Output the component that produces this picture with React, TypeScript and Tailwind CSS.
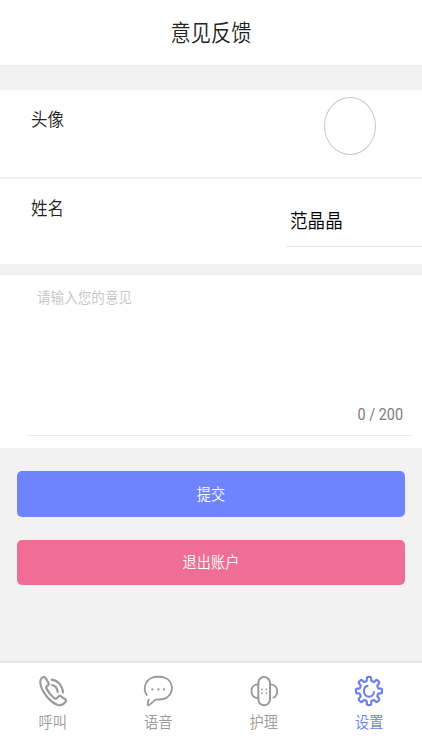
import type { ReactNode } from "react";
import clsx from "clsx";

// eight soft teeth around a slightly tall ring
const gearPath =
  Array.from({ length: 240 }, (_, i) => {
    const t = (i / 240) * Math.PI * 2;
    const r = 33.8 + 5.4 * Math.tanh(3 * Math.cos(8 * t));
    return `${i ? "L" : "M"}${(48 + r * Math.cos(t)).toFixed(2)} ${(48 + r * 1.08 * Math.sin(t)).toFixed(2)}`;
  }).join("") + "Z";

function TabIcon({ children, viewBox = "0 0 90 96" }: { children: ReactNode; viewBox?: string }) {
  return (
    <svg
      viewBox={viewBox}
      className="h-8 w-[30px]"
      fill="none"
      stroke="currentColor"
      strokeWidth="6"
      strokeLinecap="round"
      strokeLinejoin="round"
    >
      {children}
    </svg>
  );
}

const tabs = [
  {
    label: "呼叫",
    icon: (
      <TabIcon>
        <path d="M17 6C10 7 6 15 7 24C10 50 36 82 60 90C71 93 78 87 83 80C85 77 84 75 82 73L69 64C66 62 63 63 61 65L56 70C54 72 51 71 48 69C39 62 31 52 25 40C24 37 25 35 27 34L31 30C33 28 32 25 31 23L23 9C21 6 19 6 17 6Z" strokeWidth="6.5" />
        <path d="M41 14C59 16 73 31 75 52M42 30C52 32 58 39 59 51" strokeWidth="6.5" />
      </TabIcon>
    ),
  },
  {
    label: "语音",
    icon: (
      <TabIcon>
        <path d="M11 60C0 43 5 19 25 9C36 4 55 4 67 9C90 19 93 49 75 65C64 74 51 74 38 74L20 89C16 92 13 91 14 86L17 74" strokeWidth="5.5" />
        <path d="M28 43h.1M46 43h.1M63 43h.1" strokeWidth="7" />
      </TabIcon>
    ),
  },
  {
    label: "护理",
    icon: (
      <TabIcon viewBox="1.5 0 90 96">
        <rect x="29.5" y="6" width="35" height="85" rx="17.5" />
        <path d="M28 28C15 29 9 38 9 49C9 60 16 68 28 69M66 28C79 29 86 38 86 49C86 58 82 65 75 68" strokeWidth="5.5" />
        <path d="M40.5 43h.1M53.5 43h.1M40.5 55h.1M53.5 55h.1" strokeWidth="5.5" />
      </TabIcon>
    ),
  },
  {
    label: "设置",
    active: true,
    icon: (
      <TabIcon viewBox="3 0 90 96">
        <path d={gearPath} strokeWidth="6.5" />
        <path d="M46 32C37 33 33 41 33 48C33 58 39 65 48 65C57 65 63 58 63 49" strokeLinecap="butt" />
      </TabIcon>
    ),
  },
];

export default function App() {
  return (
    <div className="flex h-[750px] w-[422px] flex-col overflow-hidden bg-[#f2f2f2] font-['Roboto','Noto_Sans_CJK_SC',sans-serif] font-[350] text-[#222]">
      <header className="flex h-[66px] shrink-0 items-center justify-center border-b border-[#ebebeb] bg-white pt-0.5">
        <h1 className="scale-y-[1.12] text-[20.2px] leading-none">意见反馈</h1>
      </header>

      <section className="mt-6 h-[174px] shrink-0 bg-white">
        <div className="flex h-[89px] items-start justify-between border-b-2 border-[#f2f2f2] pr-[46.5px] pl-[31px]">
          <span className="mt-[18px] scale-y-[1.12] text-[16.4px] leading-6">头像</span>
          <div className="mt-[7px] h-[58px] w-[51.5px] rounded-[50%] border border-[#c8c8c8]" />
        </div>
        <div className="flex h-[85px] items-start justify-between pl-[31px]">
          <span className="mt-[18px] scale-y-[1.12] text-[16.4px] leading-6">姓名</span>
          <div className="mt-5 flex h-[48px] w-[136px] items-center border-b border-[#eaeaea] pb-[3px] pl-1 text-black">
            <span className="scale-y-[1.12] text-[17.6px] leading-6">范晶晶</span>
          </div>
        </div>
      </section>

      <section className="mt-[11px] h-[173px] shrink-0 bg-white pr-[10px] pl-[27px]">
        <div className="flex h-[161px] flex-col justify-between border-b border-[#eaeaea] pt-[10px] pr-[9px] pb-2 pl-[10px]">
          <span className="scale-y-[1.12] text-[13.6px] leading-6 text-[#c4c4c4]">请输入您的意见</span>
          <span className="scale-y-[1.16] self-end text-[14.4px] font-normal leading-6 text-[#7c7c7c]">0 / 200</span>
        </div>
      </section>

      <div className="mt-[23px] mr-[17px] ml-[17px] flex flex-col gap-[23px] text-[14.2px] text-white">
        <button className="flex h-[46px] items-center justify-center rounded-[5px] bg-[#6e84ff] pt-px">
          <span className="scale-y-[1.12]">提交</span>
        </button>
        <button className="flex h-[45px] items-center justify-center rounded-[5px] bg-[#f06d95] pt-px">
          <span className="scale-y-[1.12]">退出账户</span>
        </button>
      </div>

      <nav className="mt-auto flex h-[89px] shrink-0 border-t-2 border-[#e6e6e6] bg-white">
        {tabs.map((tab) => (
          <div
            key={tab.label}
            className={clsx(
              "flex flex-1 flex-col items-center pt-3",
              tab.active ? "text-[#6b7fe8]" : "text-[#999]"
            )}
          >
            {tab.icon}
            <span className="mt-[3px] scale-y-[1.12] text-[14.2px] leading-6">{tab.label}</span>
          </div>
        ))}
      </nav>
    </div>
  );
}
